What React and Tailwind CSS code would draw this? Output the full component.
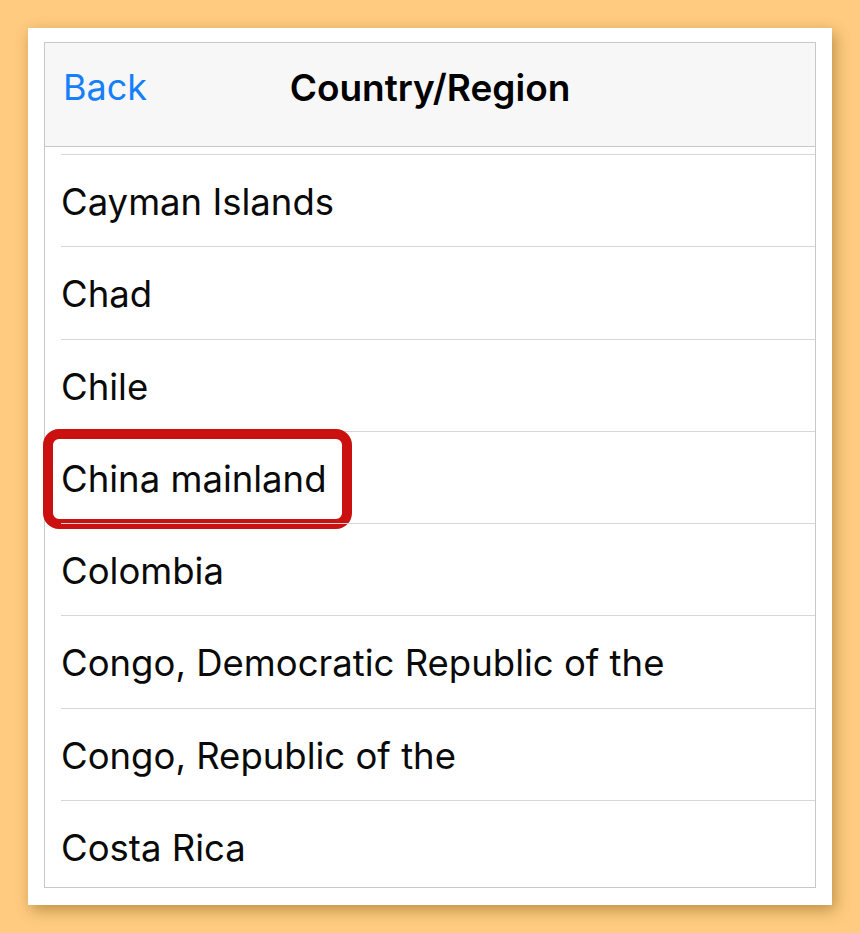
import React from "react";

const rows = [
  "Cayman Islands",
  "Chad",
  "Chile",
  "China mainland",
  "Colombia",
  "Congo, Democratic Republic of the",
  "Congo, Republic of the",
  "Costa Rica",
];

export default function App() {
  return (
    <div
      className="w-[860px] h-[933px] bg-[#fecb80] pt-[28px] pl-[28px]"
      style={{ fontFamily: "Inter, 'Noto Sans', sans-serif" }}
    >
      <div className="w-[804px] h-[877px] bg-white pt-[14px] pl-[16px] shadow-[3px_5px_14px_rgba(110,70,0,0.45)]">
        <div className="w-[772px] h-[846px] border border-[#c8c8c8] flex flex-col">
          <div className="h-[104px] shrink-0 bg-[#f7f7f7] border-b border-[#c8c8c8] relative flex items-start justify-center pt-[17px]">
            <span className="absolute left-[18px] top-[17px] text-[36px] text-[#1580fa]">
              Back
            </span>
            <span className="text-[37px] font-semibold text-black">
              Country/Region
            </span>
          </div>
          <div className="h-[7px] shrink-0" />
          {rows.map((r, i) => (
            <div
              key={r}
              className={
                i === rows.length - 1
                  ? "flex-1 min-h-0 ml-[16px] border-t border-[#d6d6d6] relative flex items-start pt-[20px]"
                  : "h-[92.3px] shrink-0 ml-[16px] border-t border-[#d6d6d6] relative flex items-start pt-[20px]"
              }
            >
              <span className="text-[36.5px] text-[#0a0a0a] whitespace-nowrap">
                {r}
              </span>
              {r === "China mainland" && (
                <div className="absolute left-[-18px] top-[-3px] w-[309px] h-[100px] border-[10px] border-[#cb1010] rounded-[16px]" />
              )}
            </div>
          ))}
        </div>
      </div>
    </div>
  );
}
